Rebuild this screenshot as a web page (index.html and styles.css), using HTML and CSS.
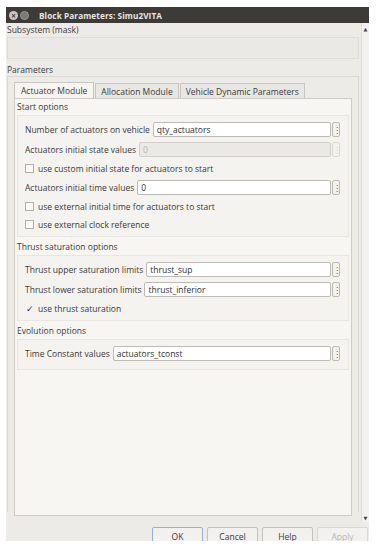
FILE: index.html
```html
<!DOCTYPE html>
<html lang="en">
<head>
    <meta charset="UTF-8">
    <title>Block Parameters: Simu2VITA</title>
    <link rel="stylesheet" href="styles.css">
</head>
<body>
    <div class="window">
        <div class="titlebar">
            <span class="wbtn close">&#215;</span>
            <span class="wbtn min"></span>
            <span class="title">Block Parameters: Simu2VITA</span>
        </div>
        <div class="main">
            <div class="content">
                <div class="label">Subsystem (mask)</div>
                <div class="desc"></div>
                <div class="label params">Parameters</div>
                <div class="tabwidget">
                    <div class="tabs">
                        <div class="tab active">Actuator Module</div>
                        <div class="tab">Allocation Module</div>
                        <div class="tab">Vehicle Dynamic Parameters</div>
                    </div>
                    <div class="panel">
                        <div class="group-title">Start options</div>
                        <div class="group">
                            <div class="row">
                                <span>Number of actuators on vehicle</span>
                                <div class="field">qty_actuators</div>
                                <div class="more">&#8942;</div>
                            </div>
                            <div class="row">
                                <span>Actuators initial state values</span>
                                <div class="field disabled">0</div>
                                <div class="more disabled">&#8942;</div>
                            </div>
                            <div class="row check"><span class="box"></span>use custom initial state for actuators to start</div>
                            <div class="row">
                                <span>Actuators initial time values</span>
                                <div class="field">0</div>
                                <div class="more">&#8942;</div>
                            </div>
                            <div class="row check"><span class="box"></span>use external initial time for actuators to start</div>
                            <div class="row check"><span class="box"></span>use external clock reference</div>
                        </div>

                        <div class="group-title">Thrust saturation options</div>
                        <div class="group">
                            <div class="row">
                                <span>Thrust upper saturation limits</span>
                                <div class="field">thrust_sup</div>
                                <div class="more">&#8942;</div>
                            </div>
                            <div class="row">
                                <span>Thrust lower saturation limits</span>
                                <div class="field">thrust_inferior</div>
                                <div class="more">&#8942;</div>
                            </div>
                            <div class="row check"><span class="box checked">&#10003;</span>use thrust saturation</div>
                        </div>

                        <div class="group-title">Evolution options</div>
                        <div class="group last">
                            <div class="row">
                                <span>Time Constant values</span>
                                <div class="field">actuators_tconst</div>
                                <div class="more">&#8942;</div>
                            </div>
                        </div>
                    </div>
                </div>
            </div>
            <div class="scrollbar">
                <span class="arrow">&#9650;</span>
                <span class="arrow">&#9660;</span>
            </div>
        </div>
        <div class="buttons">
            <button class="focus"><u>O</u>K</button>
            <button><u>C</u>ancel</button>
            <button><u>H</u>elp</button>
            <button class="disabled"><u>A</u>pply</button>
        </div>
    </div>
</body>
</html>
```
FILE: styles.css
```css
body {
    margin: 0;
    background: #ffffff;
    font-family: 'Open Sans', 'DejaVu Sans', sans-serif;
    font-size: 8.5px;
    color: #3a3a3a;
}
.window {
    margin: 7px 0 0 6px;
    width: 363px;
    height: 534px;
    background: #edebe8;
    display: flex;
    flex-direction: column;
    overflow: hidden;
}
.titlebar {
    height: 16px;
    flex: none;
    background: #3c3b37;
    display: flex;
    align-items: center;
    padding-left: 3px;
    gap: 2px;
}
.wbtn {
    width: 9px;
    height: 9px;
    border-radius: 50%;
    background: #8c8a85;
    color: #3c3b37;
    font-size: 8px;
    line-height: 9px;
    text-align: center;
    font-weight: bold;
}
.wbtn.close {
    background: #c9c7c2;
}
.wbtn.min {
    background: #7b7974;
    border: 1px solid #9a9893;
    width: 7px;
    height: 7px;
}
.title {
    color: #e8e6e2;
    font-weight: bold;
    font-size: 8.2px;
    margin-left: 8px;
    letter-spacing: 0.1px;
}
.main {
    display: flex;
    height: 499px;
    flex: none;
}
.content {
    flex: 1;
    padding: 0 2px 0 1px;
    min-width: 0;
}
.label {
    height: 14px;
    line-height: 14px;
}
.params {
    margin-top: 4px;
    height: 13px;
    line-height: 13px;
}
.desc {
    height: 20px;
    border: 1px solid #e0ddd8;
    background: #ebe9e5;
}
.tabwidget {
    border: 1px solid #dcd9d4;
    border-bottom: none;
    padding: 5px 6px 0 6px;
    height: 430px;
}
.tabs {
    display: flex;
    height: 16px;
}
.tab {
    border: 1px solid #c9c6c1;
    border-bottom: none;
    background: #e9e7e3;
    padding: 0 5px;
    line-height: 15px;
    margin-right: 1px;
    margin-top: 1px;
}
.tab.active {
    background: #f7f5f2;
    margin-top: 0;
    padding: 0 6px;
}
.panel {
    background: #f8f6f3;
    border: 1px solid #cfccc7;
    height: 416px;
    padding: 0 2px;
}
.group-title {
    height: 16px;
    line-height: 16px;
}
.group {
    background: #f5f3f0;
    border: 1px solid #e9e6e2;
    padding: 6px 8px 5px 7px;
    margin-bottom: 2px;
    display: flex;
    flex-direction: column;
    gap: 5px;
}
.group.last {
    padding-bottom: 8px;
}
.row {
    display: flex;
    align-items: center;
    height: 15px;
    gap: 3px;
}
.row > span {
    white-space: nowrap;
}
.field {
    flex: 1;
    height: 13px;
    border: 1px solid #bdbab5;
    border-radius: 2px;
    background: #ffffff;
    padding-left: 3px;
    line-height: 13px;
    color: #2f2f2f;
}
.field.disabled {
    background: #ebe9e6;
    color: #b8b6b2;
    border-color: #d2cfca;
}
.more {
    width: 6px;
    height: 13px;
    border: 1px solid #bdbab5;
    border-radius: 2px;
    background: #f4f2ef;
    font-size: 8px;
    line-height: 13px;
    text-align: center;
    color: #555;
    margin-left: -2px;
}
.more.disabled {
    color: #cfcdc9;
    border-color: #dcd9d4;
}
.check {
    gap: 4px;
    height: 13px;
}
.box {
    width: 7px;
    height: 7px;
    border: 1px solid #b1aea9;
    background: #fbfaf8;
    font-size: 7px;
    line-height: 7px;
    text-align: center;
    color: #333;
}
.box.checked {
    border-color: transparent;
    background: none;
    font-family: 'DejaVu Sans', sans-serif;
    font-size: 9px;
    line-height: 8px;
    font-weight: bold;
    color: #2e2e2e;
}
.scrollbar {
    width: 7px;
    background: #f3f2f0;
    border-left: 1px solid #e0ddd8;
    display: flex;
    flex-direction: column;
    justify-content: space-between;
    align-items: center;
    padding: 3px 0 1px;
}
.arrow {
    font-size: 5px;
    color: #444;
}
.buttons {
    display: flex;
    justify-content: flex-end;
    gap: 4px;
    padding-top: 5px;
    padding-right: 1px;
}
button {
    width: 51px;
    height: 18px;
    font-family: 'Open Sans', 'DejaVu Sans', sans-serif;
    font-size: 8.5px;
    color: #3a3a3a;
    background: #f2f1ef;
    border: 1px solid #c5c2bd;
    border-radius: 2px;
    padding: 0;
}
button.focus {
    border-color: #8fb3d9;
}
button.disabled {
    color: #b8b6b2;
    border-color: #dad7d2;
}
```
